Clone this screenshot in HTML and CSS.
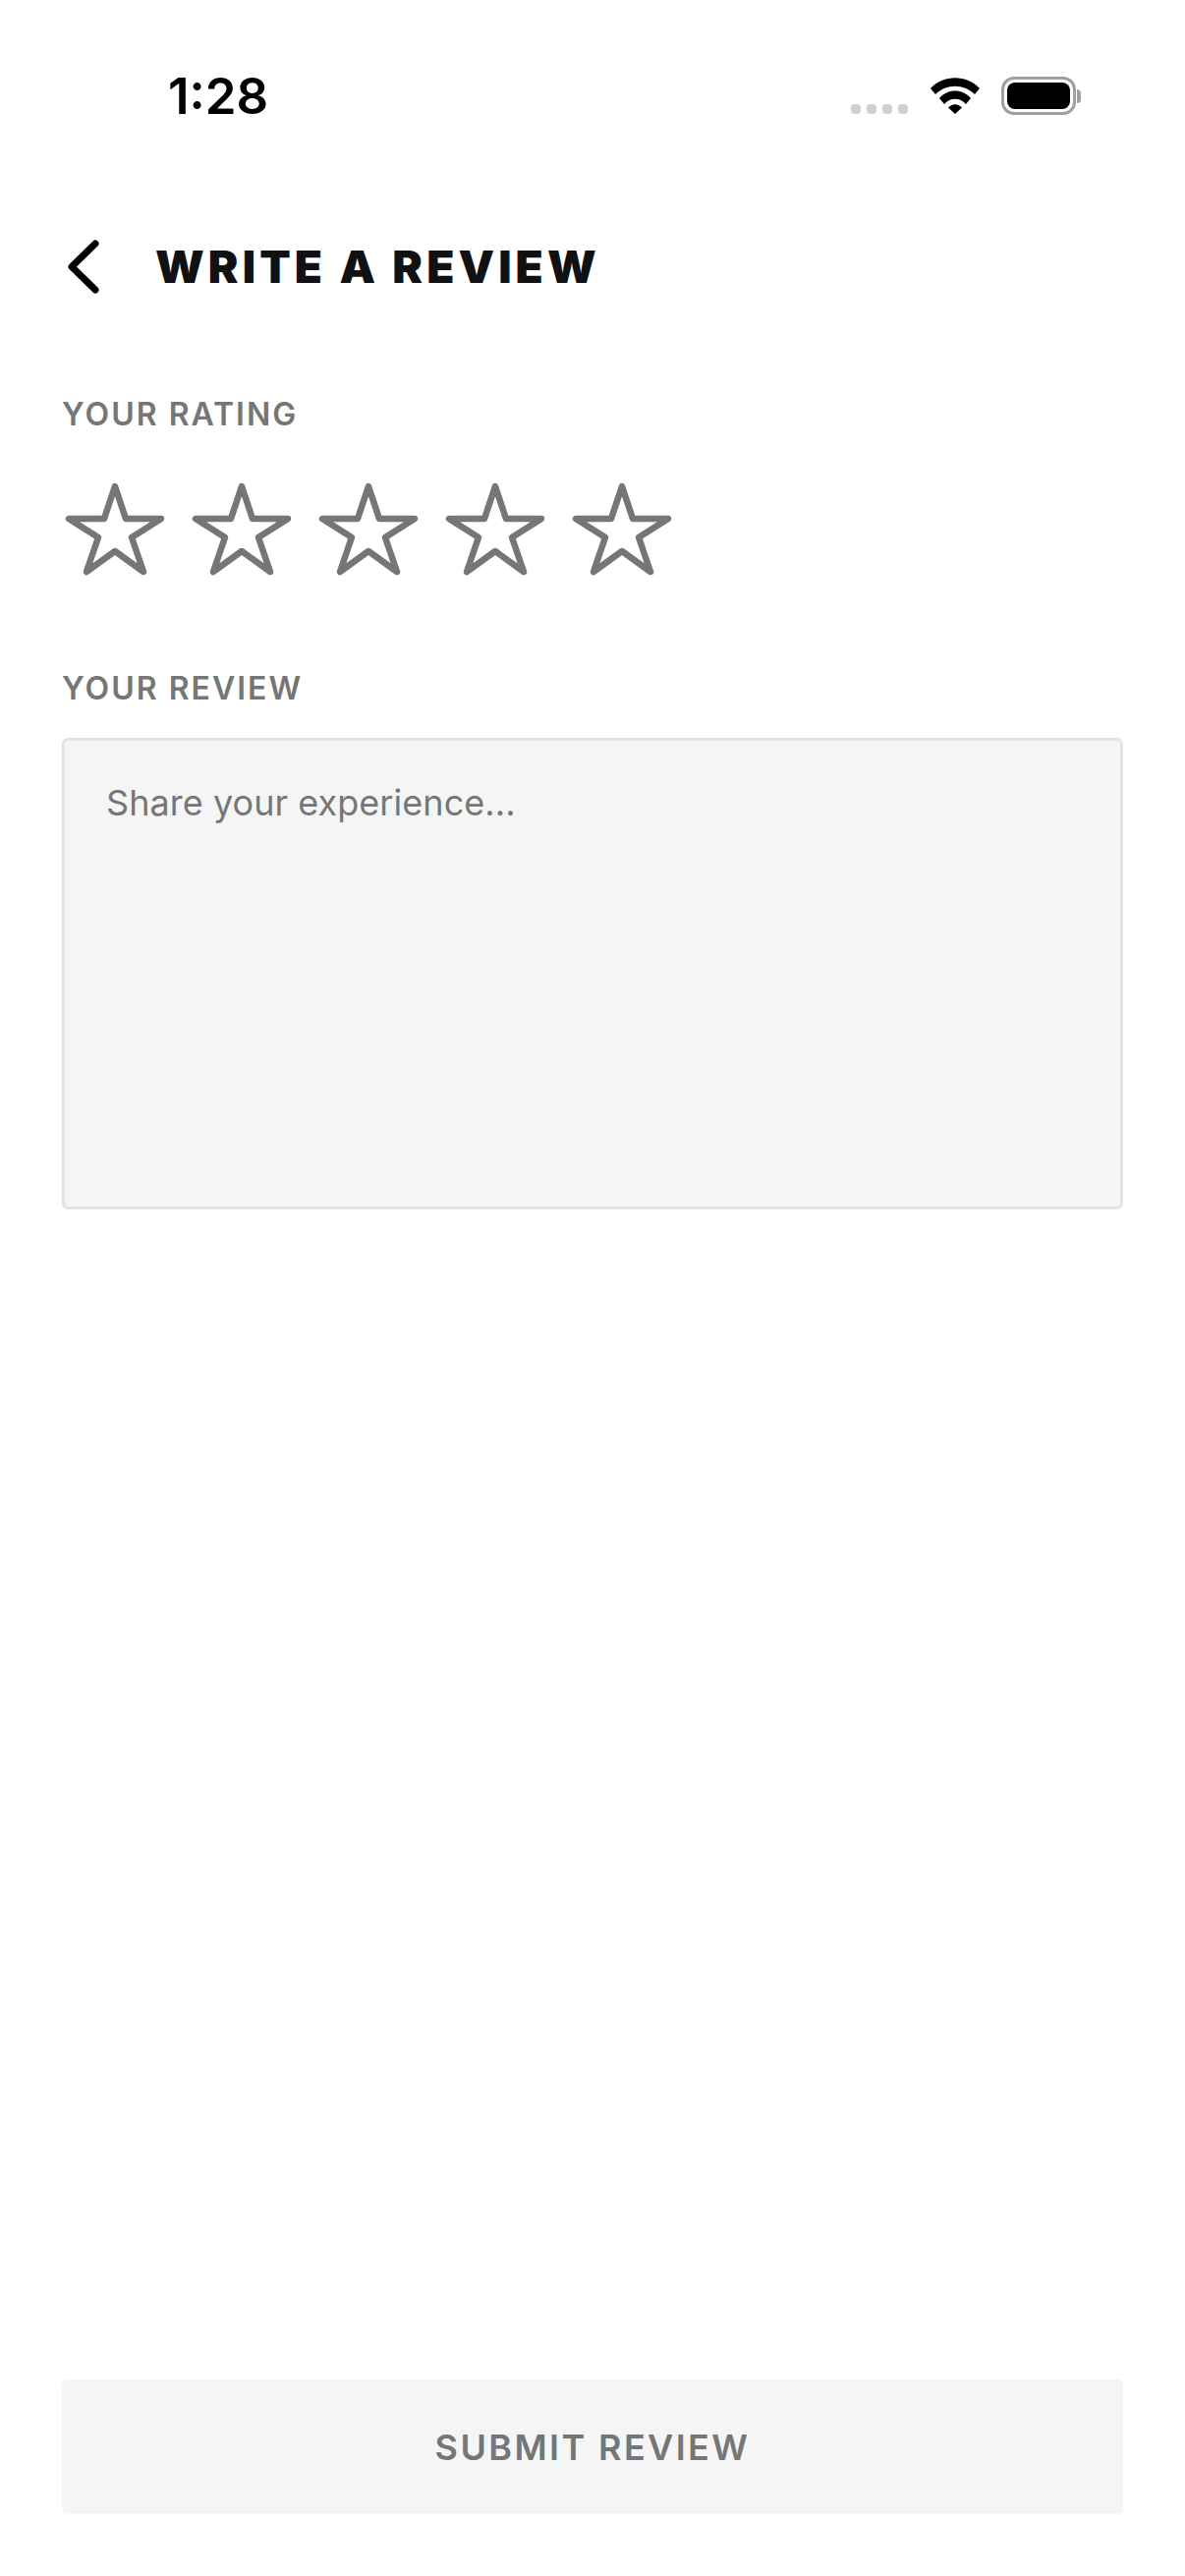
FILE: index.html
```html
<!DOCTYPE html>
<html lang="en">
<head>
<meta charset="UTF-8">
<meta name="viewport" content="width=device-width, initial-scale=1.0">
<title>Write a Review</title>
<link rel="stylesheet" href="styles.css">
</head>
<body>

<div class="screen">
  <!-- Status bar -->
  <div class="status-bar">
    <span class="time">1:28</span>
    <div class="status-icons">
      <div class="signal-dots">
        <span class="dot"></span>
        <span class="dot"></span>
        <span class="dot"></span>
        <span class="dot"></span>
      </div>
      <svg class="wifi" width="50" height="37" viewBox="0 0 50 37">
        <path d="M0 11C13-3.5 37-3.5 50 11L45 17C34 6 16 6 5 17Z"/>
        <path d="M9 21C17 11 33 11 41 21L36 27C30 20 20 20 14 27Z"/>
        <path d="M18 30.5C22 26 28 26 32 30.5L25 37Z"/>
      </svg>
      <div class="battery">
        <div class="battery-body"><div class="battery-fill"></div></div>
        <div class="battery-cap"></div>
      </div>
    </div>
  </div>

  <!-- Header -->
  <div class="header">
    <svg class="back" width="33" height="55" viewBox="0 0 33 55">
      <path d="M29 4L5 27.5L29 51"/>
    </svg>
    <h1 class="title">WRITE A REVIEW</h1>
  </div>

  <!-- Rating -->
  <div class="label rating-label">YOUR RATING</div>
  <div class="stars">
    <svg class="star" width="102" height="95" viewBox="0 0 102 95"><path d="M51 4L62 37H98L68 56L80 91L51 70L22 91L34 56L4 37H40Z"/></svg>
    <svg class="star" width="102" height="95" viewBox="0 0 102 95"><path d="M51 4L62 37H98L68 56L80 91L51 70L22 91L34 56L4 37H40Z"/></svg>
    <svg class="star" width="102" height="95" viewBox="0 0 102 95"><path d="M51 4L62 37H98L68 56L80 91L51 70L22 91L34 56L4 37H40Z"/></svg>
    <svg class="star" width="102" height="95" viewBox="0 0 102 95"><path d="M51 4L62 37H98L68 56L80 91L51 70L22 91L34 56L4 37H40Z"/></svg>
    <svg class="star" width="102" height="95" viewBox="0 0 102 95"><path d="M51 4L62 37H98L68 56L80 91L51 70L22 91L34 56L4 37H40Z"/></svg>
  </div>

  <!-- Review -->
  <div class="label review-label">YOUR REVIEW</div>
  <div class="review-box">Share your experience...</div>

  <button class="submit">SUBMIT REVIEW</button>
</div>

</body>
</html>
```

FILE: styles.css
```css
/* General Styling */
body {
  margin: 0;
  background-color: #fff;
  font-family: Inter, "Liberation Sans", sans-serif;
}

.screen {
  display: flex;
  flex-direction: column;
  box-sizing: border-box;
  width: 1206px;
  height: 2622px;
  padding: 0 63px;
  overflow: hidden;
}

/* Status bar */
.status-bar {
  display: flex;
  justify-content: space-between;
  align-items: flex-start;
  height: 244px;
  padding-top: 78px;
  box-sizing: border-box;
}

.time {
  margin-left: 108px;
  font-size: 51px;
  line-height: 40px;
  font-weight: 600;
  color: #000;
}

.status-icons {
  display: flex;
  align-items: flex-end;
  height: 39px;
  margin-right: 43px;
}

.signal-dots {
  display: flex;
  gap: 6px;
  margin-right: 23px;
  margin-bottom: 1px;
}

.dot {
  width: 10px;
  height: 10px;
  border-radius: 4px;
  background-color: #cfcfcf;
}

.wifi {
  margin-right: 22px;
  margin-bottom: 1px;
  fill: #000;
}

.battery {
  display: flex;
  align-items: center;
}

.battery-body {
  box-sizing: border-box;
  width: 76px;
  height: 39px;
  padding: 3px;
  border: 3px solid #a0a0a0;
  border-radius: 13px;
}

.battery-fill {
  height: 100%;
  background-color: #000;
  border-radius: 8px;
}

.battery-cap {
  width: 4px;
  height: 14px;
  margin-left: 1px;
  background-color: #a0a0a0;
  border-radius: 0 5px 5px 0;
}

/* Header */
.header {
  display: flex;
  align-items: center;
  height: 55px;
}

.back {
  margin-left: 5px;
  fill: none;
  stroke: #000;
  stroke-width: 7;
  stroke-linecap: round;
  stroke-linejoin: round;
}

.title {
  margin: 0 0 0 57px;
  font-size: 46px;
  font-weight: 900;
  letter-spacing: 4.1px;
  line-height: 55px;
  color: #111;
}

/* Labels */
.label {
  font-size: 32px;
  line-height: 24px;
  font-weight: 600;
  letter-spacing: 2px;
  color: #767676;
}

.rating-label {
  margin-top: 111px;
}

.review-label {
  margin-top: 103px;
}

/* Stars */
.stars {
  display: flex;
  gap: 27px;
  margin-top: 57px;
  margin-left: 3px;
}

.star {
  fill: none;
  stroke: #767676;
  stroke-width: 6.5;
  stroke-linejoin: round;
}

/* Review box */
.review-box {
  box-sizing: border-box;
  height: 480px;
  margin-top: 38px;
  padding: 41px 42px;
  background-color: #f5f5f5;
  border: 3px solid #e4e4e4;
  border-radius: 6px;
  font-size: 36px;
  line-height: 44px;
  letter-spacing: 0.05px;
  color: #767676;
}

/* Submit button */
.submit {
  height: 137px;
  margin-top: auto;
  margin-bottom: 63px;
  border: none;
  border-radius: 6px;
  background-color: #f5f5f5;
  font-family: inherit;
  font-size: 36px;
  font-weight: 600;
  letter-spacing: 2.4px;
  color: #767676;
}
```
